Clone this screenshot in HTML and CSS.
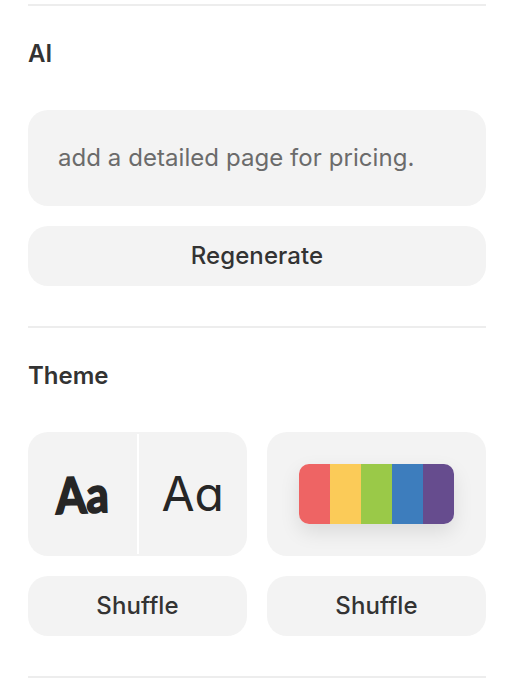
FILE: index.html
```html
<!DOCTYPE html>
<html lang="en">
<head>
<meta charset="utf-8">
<title>Settings</title>
<link rel="stylesheet" href="styles.css">
</head>
<body>
<div class="panel">
  <hr class="rule">
  <section class="section">
    <h2 class="heading">AI</h2>
    <div class="prompt">add a detailed page for pricing.</div>
    <button class="btn">Regenerate</button>
  </section>
  <hr class="rule">
  <section class="section">
    <h2 class="heading">Theme</h2>
    <div class="theme-grid">
      <div class="col">
        <div class="card fonts">
          <div class="font-cell"><span class="aa aa-hand">Aa</span></div>
          <div class="divider"></div>
          <div class="font-cell"><span class="aa aa-clean">Aa</span></div>
        </div>
        <button class="btn">Shuffle</button>
      </div>
      <div class="col">
        <div class="card palette-card">
          <div class="palette">
            <span class="sw sw1"></span><span class="sw sw2"></span><span class="sw sw3"></span><span class="sw sw4"></span><span class="sw sw5"></span>
          </div>
        </div>
        <button class="btn">Shuffle</button>
      </div>
    </div>
  </section>
  <hr class="rule">
</div>
</body>
</html>
```

FILE: styles.css
```css
* { box-sizing: border-box; }
html, body { margin: 0; padding: 0; background: #fff; }
body { width: 516px; height: 678px; overflow: hidden; font-family: Inter, "Liberation Sans", sans-serif; color: #333; }
.panel { padding: 4px 30px 0 28px; display: flex; flex-direction: column; }
.rule { margin: 0; border: 0; height: 2px; background: #ededed; flex: none; }
.section { padding: 31px 0 40px; display: flex; flex-direction: column; }
.heading { margin: 0 0 39px; font-size: 24px; line-height: 34px; font-weight: 600; color: #333; }
.prompt { height: 96px; border-radius: 20px; background: #f3f3f3; padding: 0 30px 2px; display: flex; align-items: center; font-size: 24px; letter-spacing: .06px; color: #6b6b6b; margin-bottom: 20px; }
.btn { display: block; width: 100%; height: 60px; border: 0; border-radius: 20px; background: #f3f3f3; font: 450 24px Inter, "Liberation Sans", sans-serif; letter-spacing: .08px; color: #333; padding: 0 0 2px; }
.theme-grid { display: grid; grid-template-columns: 219px 219px; gap: 20px; }
.col { display: flex; flex-direction: column; gap: 20px; }
.card { height: 124px; border-radius: 20px; background: #f3f3f3; }
.fonts { display: flex; }
.font-cell { flex: 1; display: flex; align-items: center; justify-content: center; }
.divider { width: 2px; margin: 2px 0; background: #fff; }
.aa { display: block; line-height: 1; color: #262626; }
.aa-hand { font-family: Lato, sans-serif; font-weight: 700; font-size: 50px; -webkit-text-stroke: 2px #262626; transform: scaleX(.88) rotate(-2deg); }
.aa-clean { font-family: Inter, sans-serif; font-size: 48px; font-weight: 400; font-feature-settings: "cv11" 1; }
.palette-card { display: flex; align-items: center; justify-content: center; }
.palette { display: flex; width: 155px; height: 60px; border-radius: 10px; overflow: hidden; box-shadow: 0 8px 20px rgba(0,0,0,.1); }
.sw { flex: 1; }
.sw1 { background: #ee6464; }
.sw2 { background: #fbcb58; }
.sw3 { background: #9ac948; }
.sw4 { background: #3d7dbd; }
.sw5 { background: #664c8e; }
```
